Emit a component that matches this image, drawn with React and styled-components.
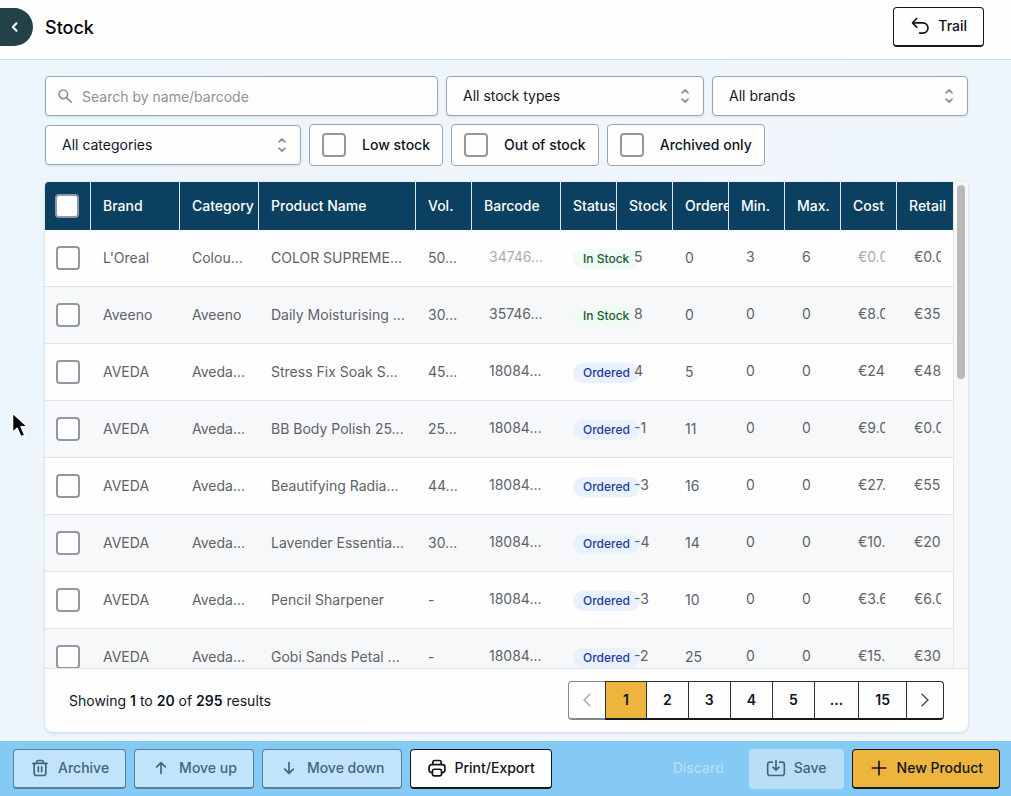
import React from "react";
import styled, { createGlobalStyle, css } from "styled-components";

const GlobalStyle = createGlobalStyle`
  *, *::before, *::after { box-sizing: border-box; }
  body { margin: 0; }
  body, button, input, select {
    font-family: Inter, "Liberation Sans", sans-serif;
    font-size: 14px;
    line-height: 20px;
    color: #10151f;
  }
`;

const Page = styled.div`
  display: flex;
  flex-direction: column;
  height: 100vh;
  background: linear-gradient(115deg, #ecf6fb 0%, #f0f6fc 60%, #eef7fb 100%);
`;

const Header = styled.header`
  display: flex;
  align-items: center;
  flex: none;
  gap: 12px;
  height: 60px;
  padding: 0 27px 6px 0;
  background: #fefefe;
  border-bottom: 1px solid #cbdbe4;
`;

const BackButton = styled.button`
  display: flex;
  align-items: center;
  justify-content: center;
  width: 33px;
  height: 38px;
  padding: 0 4px 0 0;
  border: 0;
  border-radius: 0 19px 19px 0;
  background: #244147;
  color: #fff;
`;

const Title = styled.h1`
  flex: 1;
  margin: 0;
  padding-top: 2px;
  font-size: 18px;
  line-height: 28px;
  font-weight: 500;
  color: #05070c;
`;

const Button = styled.button`
  display: inline-flex;
  align-items: center;
  justify-content: center;
  gap: 8px;
  flex: none;
  height: 40px;
  padding: 0 16px;
  border: 1px solid #14181f;
  border-bottom-width: 2px;
  border-radius: 4px;
  background: #fefefe;
  color: #10151f;
  font-weight: 500;
  white-space: nowrap;

  ${(p) => p.$tone === "primary" && css`background: #edb43e;`}
  ${(p) => p.$tone === "muted" && css`
    background: #c2e4fa;
    border-color: #587f9b;
    color: #44657c;
  `}
  ${(p) => p.$tone === "soft" && css`
    background: #b9dff6;
    border-color: #b9dff6;
    color: #44657c;
  `}
  ${(p) => p.$tone === "ghost" && css`
    background: transparent;
    border-color: transparent;
    color: #b4dcf6;
  `}
`;

const Main = styled.main`
  display: flex;
  flex-direction: column;
  flex: 1;
  min-height: 0;
  gap: 16px;
  padding: 16px 43px 9px 45px;
`;

const Filters = styled.form`
  display: flex;
  flex-wrap: wrap;
  align-items: center;
  gap: 8px;
`;

const field = css`
  width: 100%;
  height: 40px;
  border: 1px solid #9aa5b1;
  border-radius: 4px;
  background: #fefefe;
  box-shadow: 0 1px 2px rgba(30, 50, 80, 0.12);
`;

const SearchBox = styled.label`
  position: relative;
  flex: 1 1 320px;

  svg {
    position: absolute;
    left: 12px;
    top: 12px;
    color: #8d929b;
  }
`;

const SearchInput = styled.input`
  ${field}
  display: block;
  padding: 0 12px 0 36px;

  &::placeholder { color: #8d929b; opacity: 1; }
`;

const SelectBox = styled.label`
  position: relative;
  flex: none;
  width: ${(p) => p.$width};

  svg {
    position: absolute;
    right: 11px;
    top: 12px;
    color: #8d929b;
    pointer-events: none;
  }
`;

const Select = styled.select`
  ${field}
  display: block;
  appearance: none;
  padding: 0 36px 0 16px;
`;

const Toggle = styled.label`
  display: flex;
  align-items: center;
  gap: 16px;
  height: 42px;
  padding: 0 12px;
  border: 1px solid #9aa5b1;
  border-radius: 4px;
  background: #fefefe;
  font-weight: 500;
`;

const Checkbox = styled.input.attrs({ type: "checkbox" })`
  appearance: none;
  display: block;
  flex: none;
  width: 24px;
  height: 24px;
  margin: 0;
  border: 2px solid #9298a3;
  border-radius: 4px;
  background: #fefefe;
`;

const Card = styled.section`
  display: flex;
  flex-direction: column;
  flex: 1;
  min-height: 0;
  overflow: hidden;
  border-radius: 4px 4px 8px 8px;
  background: #fefefe;
  box-shadow: 0 1px 3px rgba(40, 70, 110, 0.2);
`;

const TableArea = styled.div`
  display: flex;
  flex: 1;
  min-height: 0;
  border-bottom: 1px solid #e0e2ea;
`;

const Scroller = styled.div`
  flex: 1;
  min-width: 0;
  overflow: hidden;
`;

const ScrollTrack = styled.div`
  flex: none;
  width: 15px;
  padding: 3px 3px 0 3px;
  border-left: 1px solid #e6e7e9;
  background: #f8f8f8;
`;

const ScrollThumb = styled.div`
  width: 8px;
  height: 194px;
  border-radius: 4px;
  background: #b9b9b9;
`;

const Table = styled.table`
  width: 100%;
  table-layout: fixed;
  border-collapse: separate;
  border-spacing: 0;
`;

const HeadCell = styled.th`
  height: 48px;
  padding: 0 0 0 ${(p) => (p.$tick ? "10px" : "12px")};
  overflow: hidden;
  border-right: 1px solid #dfe9ef;
  background: #0b4060;
  color: #fff;
  font-weight: 500;
  text-align: left;
  white-space: nowrap;

  &:last-child { border-right: 0; }
`;

const Row = styled.tr`
  background: #fefefe;
  &:nth-child(even) { background: #f7f8fa; }
`;

const Cell = styled.td`
  height: 57px;
  padding: 0 0 0 ${(p) => (p.$tick ? "11px" : "12px")};
  border-bottom: 1px solid #e2e3ea;
  color: #5d626c;
  white-space: nowrap;
`;

const EditCell = styled(Cell)`
  padding: 0 12px 2px 12px;
`;

const CellInput = styled.input`
  position: relative;
  display: block;
  width: 100%;
  padding: 0 0 0 5px;
  border: 0;
  background: transparent;
  color: #5d626c;

  &::placeholder { color: #a9acb2; opacity: 1; }
`;

const Badge = styled.span`
  display: inline-block;
  margin-top: 2px;
  padding: 0 10px;
  border-radius: 10px;
  font-size: 12px;
  font-weight: 500;
  background: ${(p) => (p.$status === "In Stock" ? "#effbf3" : "#e9f1fd")};
  color: ${(p) => (p.$status === "In Stock" ? "#1b5a37" : "#1f3a9c")};
`;

const CardFooter = styled.footer`
  display: flex;
  align-items: center;
  justify-content: space-between;
  flex: none;
  height: 63px;
  padding: 0 24px;

  p { margin: 0; }
  strong { font-weight: 600; }
`;

const Pagination = styled.nav`
  display: flex;
`;

const PageButton = styled.button`
  display: flex;
  align-items: center;
  justify-content: center;
  height: 39px;
  min-width: ${(p) => (p.$arrow ? "38px" : "42px")};
  margin-left: -1px;
  padding: 0 ${(p) => (p.$arrow ? "8px" : p.$gap ? "15px" : "16px")};
  border: 1px solid #2b2f36;
  border-bottom: 2px solid #14181f;
  background: ${(p) => (p.$current ? "#edb43e" : "#fefefe")};
  color: ${(p) => (p.$arrow ? "#4b5058" : "#10151f")};
  font-weight: 600;

  &:first-child { margin-left: 0; border-radius: 4px 0 0 4px; }
  &:last-child { border-radius: 0 4px 4px 0; }
  &:disabled { color: #a3a6ab; border-color: #85888d; }
`;

const ActionBar = styled.footer`
  display: flex;
  align-items: center;
  gap: 8px;
  flex: none;
  height: 55px;
  padding: 0 11px 0 13px;
  background: #85c9f5;
`;

const Spacer = styled.div`
  flex: 1;
`;

const Pointer = styled.svg`
  position: fixed;
  left: 10px;
  top: 411px;
  pointer-events: none;
`;

const Icon = ({ size = 20, width = 2, box = 24, children }) => (
  <svg width={size} height={size} viewBox={`0 0 ${box} ${box}`} fill="none" stroke="currentColor"
    strokeWidth={width} strokeLinecap="round" strokeLinejoin="round" aria-hidden="true">
    {children}
  </svg>
);

const UpDown = () => (
  <Icon size={16} box={16} width={1.8}><path d="M5 4.8 8 2l3 2.800M5 11.200 8 14l3-2.800" /></Icon>
);

const columns = [
  ["Brand", 89], ["Category", 79], ["Product Name", 157], ["Vol.", 56], ["Barcode", 89],
  ["Status", 56], ["Stock", 56], ["Ordered", 56], ["Min.", 56], ["Max.", 56], ["Cost", 56], ["Retail", 56],
];

const rows = [
  ["L'Oreal", "Colou...", "COLOR SUPREME...", "50...", "34746...", "In Stock", "5", "0", "3", "6", "€0.00", "€0.00"],
  ["Aveeno", "Aveeno", "Daily Moisturising ...", "30...", "35746...", "In Stock", "8", "0", "0", "0", "€8.00", "€35"],
  ["AVEDA", "Aveda...", "Stress Fix Soak S...", "45...", "18084...", "Ordered", "4", "5", "0", "0", "€24", "€48"],
  ["AVEDA", "Aveda...", "BB Body Polish 25...", "25...", "18084...", "Ordered", "-1", "11", "0", "0", "€9.00", "€0.00"],
  ["AVEDA", "Aveda...", "Beautifying Radia...", "44...", "18084...", "Ordered", "-3", "16", "0", "0", "€27.", "€55"],
  ["AVEDA", "Aveda...", "Lavender Essentia...", "30...", "18084...", "Ordered", "-4", "14", "0", "0", "€10.", "€20"],
  ["AVEDA", "Aveda...", "Pencil Sharpener", "-", "18084...", "Ordered", "-3", "10", "0", "0", "€3.60", "€6.00"],
  ["AVEDA", "Aveda...", "Gobi Sands Petal ...", "-", "18084...", "Ordered", "-2", "25", "0", "0", "€15.", "€30"],
];

const Editable = ({ label, value, empty }) => (
  <EditCell>
    <CellInput aria-label={label} {...(empty ? { placeholder: value } : { defaultValue: value })} />
  </EditCell>
);

const StockRow = ({ data, first }) => {
  const [brand, category, name, vol, barcode, status, stock, ordered, min, max, cost, retail] = data;
  return (
    <Row>
      <Cell $tick><Checkbox aria-label={`Select ${name}`} /></Cell>
      <Cell>{brand}</Cell>
      <Cell>{category}</Cell>
      <Cell>{name}</Cell>
      <Cell>{vol}</Cell>
      <Editable label="Barcode" value={barcode} empty={first} />
      <Cell><Badge $status={status}>{status}</Badge></Cell>
      <Editable label="Stock" value={stock} />
      <Cell>{ordered}</Cell>
      <Editable label="Min." value={min} />
      <Editable label="Max." value={max} />
      <Editable label="Cost" value={cost} empty={first} />
      <Editable label="Retail" value={retail} />
    </Row>
  );
};

const Picker = ({ label, width = "256px" }) => (
  <SelectBox $width={width}>
    <Select aria-label={label}><option>{label}</option></Select>
    <UpDown />
  </SelectBox>
);

export default function App() {
  return (
    <Page>
      <GlobalStyle />
      <Header>
        <BackButton type="button" aria-label="Back">
          <Icon size={16} box={16} width={2}><path d="M9.5 4.2 5.8 8l3.7 3.8" /></Icon>
        </BackButton>
        <Title>Stock</Title>
        <Button type="button">
          <Icon width={2}><path d="M8 3 3 8.300l5 5M3.500 8.300H15.500a6 6 0 0 1 0 12.200h-4" /></Icon>
          Trail
        </Button>
      </Header>

      <Main>
        <Filters>
          <SearchBox>
            <Icon size={16} box={16} width={1.7}><circle cx="6.300" cy="6.300" r="4.300" /><path d="m9.800 9.800 4.400 4.400" /></Icon>
            <SearchInput type="text" aria-label="Search" placeholder="Search by name/barcode" />
          </SearchBox>
          <Picker label="All stock types" width="258px" />
          <Picker label="All brands" />
          <Picker label="All categories" />
          <Toggle><Checkbox />Low stock</Toggle>
          <Toggle><Checkbox />Out of stock</Toggle>
          <Toggle><Checkbox />Archived only</Toggle>
        </Filters>

        <Card>
          <TableArea>
            <Scroller>
              <Table>
                <colgroup>
                  <col width="46" />
                  {columns.map(([name, width]) => <col key={name} width={width} />)}
                </colgroup>
                <thead>
                  <tr>
                    <HeadCell $tick><Checkbox aria-label="Select all" /></HeadCell>
                    {columns.map(([name]) => <HeadCell key={name}>{name}</HeadCell>)}
                  </tr>
                </thead>
                <tbody>
                  {rows.map((data, i) => <StockRow key={i} data={data} first={i === 0} />)}
                </tbody>
              </Table>
            </Scroller>
            <ScrollTrack><ScrollThumb /></ScrollTrack>
          </TableArea>
          <CardFooter>
            <p>Showing <strong>1</strong> to <strong>20</strong> of <strong>295</strong> results</p>
            <Pagination aria-label="Pages">
              <PageButton type="button" $arrow disabled aria-label="Previous">
                <Icon width={1.8}><path d="m15.500 5-7 7 7 7" /></Icon>
              </PageButton>
              <PageButton type="button" $current>1</PageButton>
              {["2", "3", "4", "5", "...", "15"].map((n) => (
                <PageButton type="button" key={n} $gap={n === "..."}>{n}</PageButton>
              ))}
              <PageButton type="button" $arrow aria-label="Next">
                <Icon width={1.8}><path d="m8.500 5 7 7-7 7" /></Icon>
              </PageButton>
            </Pagination>
          </CardFooter>
        </Card>
      </Main>

      <ActionBar>
        <Button type="button" $tone="muted">
          <Icon><path d="M3.500 6.500h17M8 6.500V5a2 2 0 0 1 2-2h4a2 2 0 0 1 2 2v1.500M5 6.500V18.500a2.500 2.500 0 0 0 2.500 2.500h9a2.500 2.500 0 0 0 2.500-2.500V6.500M10 10.500v6M14 10.500v6" /></Icon>
          Archive
        </Button>
        <Button type="button" $tone="muted">
          <Icon><path d="M12 18.500V5.500M6.800 10.700 12 5.500l5.200 5.200" /></Icon>
          Move up
        </Button>
        <Button type="button" $tone="muted">
          <Icon><path d="M12 5.500v13M6.800 13.300 12 18.500l5.200-5.200" /></Icon>
          Move down
        </Button>
        <Button type="button">
          <Icon><path d="M7 8V5A2 2 0 0 1 9 3h6a2 2 0 0 1 2 2V8M6.500 17.500H5.500a3 3 0 0 1-3-3V11a3 3 0 0 1 3-3h13a3 3 0 0 1 3 3v3.500a3 3 0 0 1-3 3h-1" /><rect x="6.500" y="13.500" width="11" height="8" rx="2.500" /></Icon>
          Print/Export
        </Button>
        <Spacer />
        <Button type="button" $tone="ghost">Discard</Button>
        <Button type="button" $tone="soft">
          <Icon><path d="M7.500 5H4.500A2.500 2.500 0 0 0 2 7.500v11A2.500 2.500 0 0 0 4.500 21h15a2.500 2.500 0 0 0 2.500-2.500v-11A2.500 2.500 0 0 0 19.500 5h-3M12 3v11M8.500 11l3.500 3.500 3.500-3.500" /></Icon>
          Save
        </Button>
        <Button type="button" $tone="primary">
          <Icon><path d="M12 4v16M4 12h16" /></Icon>
          New Product
        </Button>
      </ActionBar>

      <Pointer width="20" height="30" viewBox="0 0 20 30" aria-hidden="true">
        <path d="M2.500 2v19.500l4.600-4.300 3.700 8.600 4-1.700-3.700-8.400h6.400z" fill="#05070a" stroke="#fff" strokeWidth="1.500" strokeLinejoin="round" />
      </Pointer>
    </Page>
  );
}
